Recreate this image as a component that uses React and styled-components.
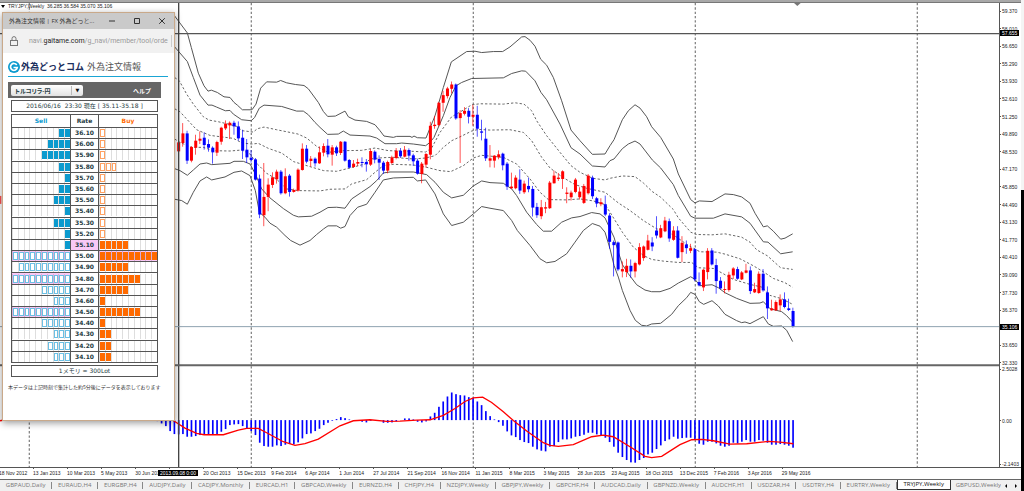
import React from 'react'
import styled, { createGlobalStyle } from 'styled-components'

const STEP = 12.8
const FIRST_X = 535.5
const ZERO_Y = 1260

// [colour, high, top, bottom, low], measured from the offset of each block
const candleBlocks = [
    {
        offset: 240,
        bars: [
            ['r', 170, 185, 212, 213], ['r', 127, 158, 187, 198], ['b', 150, 158, 240, 250], ['r', 196, 199, 240, 245],
            ['r', 162, 180, 201, 222], ['r', 152, 174, 180, 190], ['b', 155, 171, 193, 207], ['b', 176, 190, 201, 213],
            ['b', 197, 201, 215, 249], ['r', 180, 184, 216, 226], ['r', 138, 141, 183, 192], ['r', 119, 129, 143, 148],
            ['r', 122, 126, 134, 175], ['b', 120, 126, 137, 162], ['b', 122, 137, 173, 180], ['b', 147, 171, 210, 235],
            ['b', 175, 207, 230, 247], ['b', 208, 231, 238, 246], ['b', 232, 236, 297, 300], ['b', 282, 294, 402, 413],
            ['r', 247, 349, 404, 437], ['r', 293, 312, 349, 392], ['r', 275, 290, 313, 322], ['r', 267, 273, 296, 309],
            ['b', 268, 273, 338, 342], ['r', 263, 287, 338, 341], ['b', 280, 285, 334, 348], ['r', 324, 328, 334, 336],
            ['r', 263, 267, 330, 333], ['r', 188, 204, 268, 270], ['b', 193, 204, 243, 248], ['r', 226, 234, 241, 258],
            ['b', 230, 234, 248, 258], ['r', 197, 215, 248, 250], ['r', 188, 196, 216, 227], ['b', 175, 195, 221, 230],
            ['r', 193, 200, 222, 255], ['b', 195, 200, 218, 226], ['r', 181, 183, 217, 223], ['b', 181, 183, 240, 243],
            ['b', 235, 238, 261, 263], ['r', 238, 249, 259, 262], ['r', 234, 244, 249, 256], ['b', 230, 244, 247, 260],
            ['b', 235, 244, 251, 273], ['r', 205, 211, 252, 256], ['b', 209, 213, 237, 248], ['b', 224, 235, 246, 298],
            ['b', 241, 246, 270, 280], ['r', 240, 244, 270, 278],
        ],
    },
    {
        offset: 120,
        bars: [
            ['r', 345, 350, 367, 371], ['r', 322, 330, 352, 356], ['b', 322, 330, 347, 352], ['r', 316, 327, 348, 350],
            ['b', 323, 328, 345, 360], ['b', 339, 344, 362, 376], ['b', 354, 360, 399, 402], ['r', 364, 369, 400, 428],
            ['r', 337, 340, 372, 381], ['r', 243, 255, 342, 356], ['r', 225, 252, 256, 264], ['r', 183, 186, 253, 257],
            ['r', 150, 163, 186, 213], ['r', 138, 143, 166, 173], ['r', 122, 131, 144, 158], ['b', 128, 131, 233, 237],
            ['r', 208, 217, 232, 367], ['r', 199, 210, 219, 224], ['b', 202, 210, 228, 248], ['r', 192, 222, 228, 255],
            ['b', 195, 222, 264, 288], ['b', 237, 272, 276, 299], ['b', 261, 294, 353, 361], ['r', 313, 353, 360, 380],
            ['r', 343, 345, 360, 381], ['r', 329, 341, 350, 356], ['b', 336, 339, 374, 389], ['b', 364, 369, 438, 448],
            ['r', 396, 438, 443, 445], ['r', 404, 411, 443, 446], ['b', 386, 417, 450, 460], ['r', 420, 429, 455, 460],
            ['b', 411, 436, 446, 455], ['b', 436, 445, 501, 528], ['b', 487, 499, 524, 532], ['r', 478, 500, 527, 536],
            ['r', 484, 500, 504, 518], ['r', 421, 426, 503, 505], ['r', 390, 405, 428, 429], ['r', 397, 411, 415, 421],
            ['r', 389, 392, 415, 445], ['r', 440, 456, 460, 488], ['r', 450, 456, 470, 480], ['r', 412, 417, 454, 458],
            ['r', 440, 453, 470, 477], ['r', 430, 436, 487, 490], ['r', 400, 405, 458, 462], ['b', 405, 411, 467, 475],
            ['b', 469, 473, 489, 500],
        ],
    },
    {
        offset: 240,
        bars: [
            ['r', 353, 365, 371, 377], ['b', 345, 371, 402, 407], ['b', 398, 405, 484, 505], ['b', 480, 485, 494, 588],
            ['b', 483, 486, 567, 572], ['r', 543, 566, 573, 591], ['r', 535, 556, 575, 590], ['b', 537, 556, 573, 592],
            ['r', 544, 548, 573, 591], ['r', 488, 500, 552, 555], ['r', 495, 498, 533, 541], ['r', 463, 480, 508, 510],
            ['b', 470, 486, 498, 512], ['b', 407, 450, 465, 474], ['r', 433, 443, 471, 473], ['r', 409, 420, 452, 455],
            ['b', 414, 422, 474, 484], ['r', 437, 450, 478, 481], ['b', 437, 450, 532, 534], ['r', 467, 487, 515, 545],
            ['b', 480, 492, 503, 520], ['r', 490, 503, 511, 518], ['b', 503, 506, 597, 602], ['b', 576, 605, 615, 618],
            ['r', 565, 568, 621, 632], ['r', 503, 511, 575, 597], ['b', 503, 510, 552, 555], ['b', 535, 554, 602, 640],
            ['b', 590, 601, 624, 627], ['r', 603, 626, 629, 639], ['r', 574, 583, 629, 634], ['r', 560, 564, 585, 596],
            ['b', 559, 566, 595, 598], ['r', 572, 576, 597, 599], ['r', 550, 570, 577, 579], ['b', 558, 570, 632, 641],
            ['r', 607, 626, 636, 638], ['r', 573, 580, 638, 640], ['b', 566, 580, 630, 634], ['b', 618, 636, 684, 716],
            ['r', 658, 684, 690, 691], ['r', 660, 665, 690, 692], ['r', 642, 657, 675, 692], ['b', 636, 657, 680, 684],
            ['b', 655, 684, 689, 692], ['b', 682, 692, 740, 742],
        ],
    },
]

const candles = candleBlocks.flatMap(({ offset, bars }) =>
    bars.map(([color, ...prices]) => [color, ...prices.map((p) => p + offset)])
)

const solidBands = [
    '524,45 562,96 574,140 595,217 612,255 624,271 634,268 652,275 672,288 690,290 702,305 712,313 727,327 756,327 768,310 782,262 800,243 830,244 842,239 860,246 886,251 912,254 925,264 955,305 970,332 983,347 1006,346 1035,331 1045,348 1065,358 1100,362 1125,372 1140,390 1152,406 1180,410 1190,407 1230,407 1236,410 1242,406 1252,411 1278,412 1290,382 1305,345 1330,260 1354,183 1400,152 1425,151 1445,155 1480,152 1508,152 1530,138 1565,108 1575,107 1590,118 1605,136 1622,175 1640,193 1660,230 1685,300 1713,388 1740,420 1777,461 1815,460 1830,435 1842,417 1867,357 1885,330 1905,312 1920,322 1940,348 1955,378 1982,410 2020,475 2035,520 2072,597 2085,607 2098,601 2136,603 2175,580 2200,582 2225,589 2250,608 2265,638 2290,679 2302,676 2320,692 2342,716 2355,713 2378,700',
    '524,138 562,182 580,230 600,283 624,313 636,313 650,319 676,330 690,329 700,340 725,357 754,360 764,350 778,322 792,313 845,317 890,331 910,331 925,342 945,365 960,380 983,401 1015,400 1030,391 1050,403 1110,406 1130,412 1155,429 1190,429 1205,427 1240,430 1277,435 1290,425 1302,410 1330,345 1350,290 1368,255 1385,245 1415,233 1510,231 1535,218 1565,210 1577,211 1605,240 1623,275 1640,297 1680,370 1713,441 1740,460 1777,496 1815,499 1830,480 1842,475 1867,444 1885,430 1905,421 1920,430 1957,478 1982,502 2020,552 2035,585 2072,647 2085,653 2140,653 2175,640 2225,649 2250,668 2290,724 2304,725 2342,760 2378,754',
    '524,504 540,510 562,524 580,508 600,490 620,487 635,492 690,488 702,482 730,482 750,490 766,520 785,565 810,592 850,624 880,644 895,649 935,647 960,635 984,621 1010,620 1035,623 1055,595 1085,575 1110,558 1130,540 1150,517 1170,514 1240,514 1280,522 1305,545 1330,575 1355,592 1390,584 1420,556 1445,541 1470,546 1510,548 1535,565 1550,585 1580,635 1610,672 1630,692 1655,692 1685,665 1715,652 1740,648 1775,636 1800,640 1815,652 1830,685 1842,710 1855,755 1867,792 1885,820 1910,853 1935,869 1955,874 1980,874 2010,864 2035,848 2072,829 2085,837 2100,856 2136,853 2155,862 2175,877 2210,894 2250,909 2280,908 2290,904 2310,925 2345,934 2360,946 2378,966',
    '524,596 545,600 562,611 580,575 600,541 620,529 635,538 675,529 702,515 725,511 750,525 766,570 778,635 795,650 810,668 830,680 855,705 872,720 900,734 930,720 950,702 971,685 984,676 1010,676 1022,683 1035,678 1050,645 1073,620 1100,611 1125,575 1150,538 1180,532 1240,530 1252,541 1277,538 1305,580 1330,640 1355,675 1390,665 1420,640 1445,618 1470,623 1510,630 1535,660 1552,690 1590,735 1620,775 1640,787 1665,783 1700,760 1725,725 1750,690 1777,669 1800,677 1815,695 1830,745 1842,795 1855,830 1867,870 1890,930 1906,960 1925,975 1940,977 1955,971 1982,969 2015,942 2035,916 2060,892 2072,876 2085,882 2098,904 2111,912 2136,901 2155,917 2175,942 2210,961 2225,967 2235,965 2250,970 2290,949 2305,971 2320,978 2345,977 2360,990 2378,1024',
]

const dashedBands = [
    '524,230 538,240 560,280 580,310 610,348 627,358 655,363 685,370 710,377 727,390 760,394 772,384 792,379 830,387 894,400 920,412 950,437 984,455 1030,450 1085,449 1125,442 1165,450 1240,452 1277,454 1295,442 1320,395 1355,348 1390,328 1415,312 1440,309 1510,310 1545,306 1572,310 1595,330 1610,360 1640,405 1680,455 1713,495 1740,515 1778,533 1815,538 1830,533 1867,526 1905,528 1930,547 1957,573 1982,590 2020,627 2035,652 2072,695 2090,702 2136,703 2175,700 2225,710 2250,725 2270,748 2302,766 2342,802 2378,807',
    '524,324 540,333 574,370 590,387 630,404 700,413 727,427 755,430 775,428 805,443 845,457 881,483 930,498 971,510 1010,512 1050,502 1095,490 1110,475 1150,471 1180,470 1240,475 1277,472 1305,465 1330,440 1355,420 1385,406 1415,391 1435,386 1470,388 1530,387 1570,395 1595,420 1625,470 1650,502 1688,530 1725,552 1760,563 1815,575 1855,607 1890,630 1930,660 1970,685 2000,692 2030,710 2065,735 2100,754 2150,755 2175,761 2220,775 2260,796 2290,814 2320,834 2355,847 2378,861',
    '524,415 540,425 574,440 610,440 640,450 690,451 725,448 750,460 772,490 800,518 830,536 860,565 895,570 960,571 990,566 1035,565 1055,550 1100,537 1125,515 1150,495 1180,491 1240,493 1280,500 1320,510 1352,513 1390,495 1420,472 1445,464 1510,470 1550,490 1590,535 1620,575 1645,597 1700,598 1740,595 1780,601 1815,612 1830,635 1867,695 1900,740 1930,765 1955,777 1990,782 2035,786 2075,786 2095,802 2140,804 2170,820 2200,837 2250,852 2285,860 2310,885 2345,895 2378,912',
]

const signalLine =
    '515,1258 530,1268 555,1284 590,1300 612,1304 670,1304 715,1290 740,1285 775,1285 800,1298 850,1325 885,1336 915,1331 955,1317 1020,1277 1060,1262 1110,1259 1160,1264 1200,1263 1250,1260 1290,1259 1330,1246 1365,1225 1395,1204 1420,1193 1448,1191 1475,1207 1510,1235 1540,1261 1580,1293 1630,1328 1650,1336 1675,1339 1720,1334 1775,1310 1810,1305 1840,1310 1890,1340 1935,1369 1955,1373 1985,1369 2040,1334 2075,1319 2105,1318 2140,1322 2190,1332 2240,1331 2305,1324 2340,1326 2380,1331'

// starts five weeks before the first candle
const histogram = [
    -3, -10, -18, -33, -42, -43, -42, -50, -50, -48, -45, -43, -43, -42, -43, -35, -27, -15, -13, -12, -18, -25, -33, -45,
    -68, -78, -80, -80, -76, -78, -74, -72, -73, -67, -55, -42, -40, -33, -26, -15, -8, -2, 3, 9, 6, 2, 0, -2, -5, -7, -2,
    0, 0, -8, -8, -7, -4, 0, 5, 5, 2, -5, -7, -4, 11, 22, 40, 56, 71, 83, 78, 75, 74, 69, 67, 56, 45, 27, 12, 2, -6, -17,
    -34, -46, -51, -60, -66, -69, -80, -88, -92, -94, -80, -78, -66, -58, -58, -55, -50, -48, -44, -38, -38, -43, -45, -53,
    -66, -80, -98, -111, -120, -127, -128, -120, -114, -103, -98, -87, -76, -63, -58, -50, -56, -54, -53, -53, -60, -71, -74,
    -65, -65, -70, -77, -80, -77, -68, -70, -65, -60, -65, -65, -60, -62, -68, -74, -74, -72, -74, -77, -83,
]

const yearLines = [88, 754, 1420, 2086, 2752]

// the empty step is the one that the current price tag covers
const prices = [
    '59.370', '58.010', '56.650', '55.290', '53.930', '52.610', '51.250', '49.890', '48.530', '47.170', '45.850',
    '44.490', '43.130', '41.770', '40.410', '39.090', '37.730', '36.370', '', '33.650', '32.330',
]

// the empty step is the one under the cursor's date tag
const dates = [
    '18 Nov 2012', '13 Jan 2013', '10 Mar 2013', '5 May 2013', '30 Jun 2013', '', '20 Oct 2013',
    '15 Dec 2013', '9 Feb 2014', '6 Apr 2014', '1 Jun 2014', '27 Jul 2014', '21 Sep 2014', '16 Nov 2014',
    '11 Jan 2015', '8 Mar 2015', '3 May 2015', '28 Jun 2015', '23 Aug 2015', '18 Oct 2015', '13 Dec 2015',
    '7 Feb 2016', '3 Apr 2016', '29 May 2016',
]

const tabs = [
    'GBPAUD,Daily', 'EURAUD,H4', 'EURGBP,H4', 'AUDJPY,Daily', 'CADJPY,Monthly', 'EURCAD,H1', 'GBPCAD,Weekly',
    'EURNZD,H4', 'CHFJPY,H4', 'NZDJPY,Weekly', 'GBPJPY,Weekly', 'GBPCHF,H4', 'AUDCAD,Daily', 'GBPNZD,Weekly',
    'AUDCHF,H1', 'USDZAR,H4', 'USDTRY,H4', 'EURTRY,Weekly', 'TRYJPY,Weekly', 'GBPUSD,Weekly',
]

// [rate, sell, buy, highlighted cells]
const orders = [
    ['36.10', 2, 1], ['36.00', 4, 1], ['35.90', 5, 1], ['35.80', 2, 3], ['35.70', 1, 1], ['35.60', 2, 1],
    ['35.50', 3, 1], ['35.40', 1, 1], ['35.30', 3, 1], ['35.20', 1, 1], ['35.10', 1, 5, 'rate'],
    ['35.00', 10, 10, 'sell buy'], ['34.90', 9, 5], ['34.80', 10, 7, 'sell'], ['34.70', 5, 5], ['34.60', 3, 1],
    ['34.50', 10, 7, 'sell'], ['34.40', 5, 1], ['34.30', 3, 2], ['34.20', 4, 2], ['34.10', 3, 2],
]

const slots = Array.from({ length: 10 }, (_, i) => i)

function Chart() {
    return (
        <ChartSvg viewBox="0 6 2997 1395" preserveAspectRatio="none" aria-label="TRYJPY weekly chart">
            <g stroke="#888" strokeWidth="4" strokeDasharray="7 6">
                {yearLines.map((x) => (
                    <line key={x} x1={x} x2={x} y1="6" y2="1401" />
                ))}
            </g>
            <g fill="none" stroke="#555" strokeWidth="3">
                {solidBands.map((points, i) => (
                    <polyline key={i} points={points} />
                ))}
            </g>
            <g fill="none" stroke="#666" strokeWidth="3" strokeDasharray="7 6">
                {dashedBands.map((points, i) => (
                    <polyline key={i} points={points} />
                ))}
            </g>
            {candles.map(([color, high, top, bottom, low], i) => {
                const x = FIRST_X + i * STEP
                return (
                    <g key={i} fill={color === 'r' ? '#ff0000' : '#0000ff'}>
                        <rect x={x - 1} y={high} width="2" height={low - high} />
                        <rect x={x - 4} y={top} width="9" height={bottom - top} />
                    </g>
                )
            })}
            <g fill="#0000ff">
                {histogram.map((value, i) => (
                    <rect
                        key={i}
                        x={FIRST_X + (i - 5) * STEP - 2}
                        y={value > 0 ? ZERO_Y - value : ZERO_Y}
                        width="5"
                        height={Math.abs(value)}
                    />
                ))}
            </g>
            <polyline points={signalLine} fill="none" stroke="#ff0000" strokeWidth="4" />
            <polyline points="0,1262 16,1259" fill="none" stroke="#ff0000" strokeWidth="4" />
            <rect x="0" y="586" width="4" height="24" fill="#ff5050" />
            <line x1="0" x2="2997" y1="98" y2="98" stroke="#555" strokeWidth="4" />
            <line x1="536" x2="536" y1="6" y2="1401" stroke="#444" strokeWidth="4" />
            <line x1="0" x2="2997" y1="979" y2="979" stroke="#8fa3b0" strokeWidth="3" />
            <line x1="0" x2="2997" y1="1095" y2="1095" stroke="#666" strokeWidth="6" />
            <path d="M2382 6h20l-10 9z" fill="#777" />
        </ChartSvg>
    )
}

function Meter({ side, count, hollow }) {
    return (
        <Slots>
            {slots.map((i) => {
                const on = side === 'sell' ? i >= 10 - count : i < count
                return (
                    <Slot key={i}>
                        {on && <Unit $side={side} $hollow={hollow} />}
                    </Slot>
                )
            })}
        </Slots>
    )
}

function OrderWindow() {
    return (
        <Popup>
            <TitleBar>
                <WindowTitle>外為注文情報 | FX 外為どっと...</WindowTitle>
                <WindowButton aria-label="minimize">
                    <svg viewBox="0 0 8 8"><path d="M1 4h6" /></svg>
                </WindowButton>
                <WindowButton aria-label="maximize">
                    <svg viewBox="0 0 8 8"><path d="M1.5 1.5h5v5h-5z" /></svg>
                </WindowButton>
                <WindowButton aria-label="close">
                    <svg viewBox="0 0 8 8"><path d="M1.2 1.2l5.6 5.6M6.8 1.2L1.2 6.8" /></svg>
                </WindowButton>
            </TitleBar>
            <AddressBar>
                <svg width="8" height="11" viewBox="0 0 8 11" fill="none" stroke="#777">
                    <rect x="0.5" y="4.5" width="7" height="5" />
                    <path d="M2 4.500V2.600a2 2 0 0 1 4 0V4.500" />
                </svg>
                <Url>navi.<b>gaitame.com</b>/g_navi/member/tool/orde</Url>
            </AddressBar>
            <Content>
                <Brand>
                    <svg width="12" height="12" viewBox="0 0 24 24">
                        <circle cx="12" cy="12" r="12" fill="#0b9ace" />
                        <path d="M17.500 8A6.800 6.800 0 1 0 18.500 13H11" fill="none" stroke="#fff" strokeWidth="3.400" />
                    </svg>
                    <BrandName>外為どっとコム</BrandName>
                    <BrandSub>外為注文情報</BrandSub>
                </Brand>
                <Toolbar>
                    <PairWrap>
                        <PairSelect aria-label="通貨ペア" defaultValue="try">
                            <option value="try">トルコリラ-円</option>
                        </PairSelect>
                    </PairWrap>
                    <HelpLink href="#help">ヘルプ</HelpLink>
                </Toolbar>
                <Box>2016/06/16&nbsp; 23:30 現在 [ 35.11-35.18 ]</Box>
                <OrderTable>
                    <thead>
                        <tr>
                            <Th $color="#0b9ace">Sell</Th>
                            <Th $color="#1d3a42" $rate>Rate</Th>
                            <Th $color="#ff6a00">Buy</Th>
                        </tr>
                    </thead>
                    <tbody>
                        {orders.map(([rate, sell, buy, marks = ''], i) => (
                            <tr key={rate}>
                                <Td $on={marks.includes('sell')}>
                                    <Meter side="sell" count={sell} hollow={i > 10} />
                                </Td>
                                <Td $on={marks.includes('rate')}>{rate}</Td>
                                <Td $on={marks.includes('buy')}>
                                    <Meter side="buy" count={buy} hollow={i < 10} />
                                </Td>
                            </tr>
                        ))}
                    </tbody>
                </OrderTable>
                <Box>1メモリ = 300Lot</Box>
                <Note>本データは上記時刻で集計した約5分後にデータを表示しております</Note>
            </Content>
        </Popup>
    )
}

export default function App() {
    return (
        <>
            <GlobalStyle />
            <Screen>
                <Terminal>
                    <TopEdge />
                    <ChartRow>
                        <Plot>
                            <Chart />
                            <ChartTitle>
                                <svg width="4" height="3" viewBox="0 0 4 3"><path d="M0 0h4L2 3z" /></svg>
                                TRYJPY,Weekly&nbsp; 36.285 36.584 35.070 35.106
                            </ChartTitle>
                        </Plot>
                        <Axis>
                            <PriceScale>
                                {prices.map((price, i) => (
                                    <Tick key={i}>{price}</Tick>
                                ))}
                                <PriceTag $top={27}>57.655</PriceTag>
                                <PriceTag $top={321}>35.106</PriceTag>
                            </PriceScale>
                            <MacdScale>
                                <Tick>2.5028</Tick>
                                <Tick>0.00</Tick>
                                <Tick>-2.1403</Tick>
                            </MacdScale>
                        </Axis>
                    </ChartRow>
                    <DateRow>
                        <Dates>
                            {dates.map((date, i) => (
                                <DateLabel key={i}>{date}</DateLabel>
                            ))}
                        </Dates>
                        <DateTag>2013.09.08 0:00</DateTag>
                    </DateRow>
                    <TabBar>
                        <TabList>
                            {tabs.map((tab) => (
                                <Tab key={tab} $active={tab === 'TRYJPY,Weekly'}>{tab}</Tab>
                            ))}
                        </TabList>
                        <Arrow aria-label="previous"><svg viewBox="0 0 4 6"><path d="M3 1v4L1 3z" /></svg></Arrow>
                        <Arrow aria-label="next"><svg viewBox="0 0 4 6"><path d="M1 1v4l2-2z" /></svg></Arrow>
                    </TabBar>
                </Terminal>
                <Edge />
                <OrderWindow />
            </Screen>
        </>
    )
}

const GlobalStyle = createGlobalStyle`
    * {
        box-sizing: border-box;
    }
    body {
        margin: 0;
        background: #fff;
        font-family: "Liberation Sans", "Noto Sans CJK JP", sans-serif;
    }
    button {
        padding: 0;
        border: 0;
        background: none;
    }
`
const Screen = styled.div`
    position: relative;
    display: flex;
    min-height: 100vh;
    overflow: hidden;
`
const Terminal = styled.div`
    flex: 1;
    min-width: 0;
    display: flex;
    flex-direction: column;
`
const Edge = styled.div`
    width: 3px;
    background: linear-gradient(#f4f4f4 0 190px, #000 190px);
`
const TopEdge = styled.div`
    height: 2px;
    background: #a8a8a8;
`
const ChartRow = styled.div`
    flex: 1;
    display: flex;
    border-top: 1px solid #777;
    border-bottom: 1px solid #555;
`
const Plot = styled.div`
    position: relative;
    flex: 1;
    min-width: 0;
`
const ChartSvg = styled.svg`
    display: block;
    width: 100%;
    height: 464px;
`
const ChartTitle = styled.div`
    position: absolute;
    top: 0;
    left: 1px;
    display: flex;
    align-items: center;
    gap: 3px;
    padding-right: 1px;
    font-size: 5px;
    line-height: 7px;
    color: #222;
    white-space: nowrap;
`
const Axis = styled.div`
    width: 22px;
    display: grid;
    grid-template-rows: 361fr 103fr;
    border-left: 1px solid #555;
    font-size: 5px;
    line-height: 6px;
    color: #222;
`
const PriceScale = styled.div`
    position: relative;
    display: flex;
    flex-direction: column;
    justify-content: space-between;
    margin-bottom: -2px;
    padding-top: 5px;
`
const MacdScale = styled.div`
    display: grid;
    grid-template-rows: 51fr 43fr 6px;
    padding-top: 2px;
`
const Tick = styled.div`
    display: flex;
    align-items: center;
    align-self: start;
    gap: 1px;
    height: 6px;

    &::before {
        content: '';
        width: 1px;
        height: 1px;
        background: #555;
    }
`
const PriceTag = styled.div`
    position: absolute;
    top: ${({ $top }) => $top}px;
    left: 0;
    padding: 0 2px;
    background: #000;
    color: #fff;
`
const DateRow = styled.div`
    position: relative;
    height: 11px;
    font-size: 5px;
    line-height: 8px;
    color: #222;
`
const Dates = styled.div`
    display: flex;
    width: 80%;
    margin-left: -1px;
`
const DateLabel = styled.div`
    flex: 1;
    min-width: 0;
    white-space: nowrap;

    &::before {
        content: '';
        display: block;
        width: 1px;
        height: 1px;
        background: #555;
    }
`
const DateTag = styled.div`
    position: absolute;
    top: 2px;
    left: 158px;
    width: 40px;
    background: #000;
    color: #fff;
    line-height: 6px;
    text-align: center;
    white-space: nowrap;
`
const TabBar = styled.div`
    display: flex;
    height: 12px;
    border-top: 1px solid #666;
    background: #f0f0f0;
`
const TabList = styled.div`
    flex: 1;
    min-width: 0;
    display: flex;
    align-items: center;
    overflow: hidden;
`
const Tab = styled.button`
    flex: 1 0 auto;
    height: ${({ $active }) => ($active ? '10px' : '7px')};
    align-self: ${({ $active }) => ($active ? 'flex-start' : 'center')};
    padding: 0 5px;
    border-right: 1px solid ${({ $active }) => ($active ? '#333' : '#888')};
    border-left: ${({ $active }) => ($active ? '1px solid #333' : '0')};
    border-bottom: ${({ $active }) => ($active ? '1px solid #333' : '0')};
    background: ${({ $active }) => ($active ? '#fff' : 'none')};
    font-family: "Open Sans", sans-serif;
    font-size: 6px;
    line-height: 7px;
    color: ${({ $active }) => ($active ? '#111' : '#777')};
    white-space: nowrap;

    &:last-child {
        flex-grow: 0;
        padding-right: 0;
        border-right: 0;
    }
`
const Arrow = styled.button`
    width: 10px;
    display: flex;
    align-items: center;
    justify-content: center;

    & svg {
        width: 4px;
        height: 6px;
    }
`
const Popup = styled.section`
    position: absolute;
    top: 12px;
    left: 2px;
    width: 173px;
    border: 1px solid #c9a98a;
    background: #fff;
    box-shadow: 0 2px 7px rgba(0,0,0,0.4);
`
const TitleBar = styled.header`
    display: flex;
    align-items: center;
    height: 16px;
    padding-left: 6px;
    background: #cacaca;
`
const WindowTitle = styled.h1`
    flex: 1;
    margin: 0;
    font-family: "Open Sans", "Noto Sans CJK JP", sans-serif;
    font-size: 6px;
    font-weight: 400;
    line-height: 10px;
    color: #333;
    white-space: nowrap;
`
const WindowButton = styled.button`
    width: 25px;
    display: flex;
    align-items: center;
    justify-content: center;

    & svg {
        width: 8px;
        height: 8px;
        fill: none;
        stroke: #333;
        stroke-width: 1;
    }
`
const AddressBar = styled.div`
    display: flex;
    align-items: center;
    gap: 11px;
    height: 24px;
    padding: 0 2px 0 7px;
    background: #f1f1f1;
`
const Url = styled.div`
    flex: 1;
    border-right: 1px solid #ccc;
    font-family: Roboto, sans-serif;
    font-size: 7px;
    line-height: 12px;
    color: #999;
    white-space: nowrap;

    & b {
        font-weight: 400;
        color: #222;
    }
`
const Content = styled.div`
    padding: 5px 13px 29px 5px;
    color: #1d3a42;
    font-family: "DejaVu Sans", "Noto Sans CJK JP", sans-serif;
    font-size: 6px;
`
const Brand = styled.div`
    display: flex;
    align-items: center;
    height: 19px;
    margin-right: -7px;
    border-bottom: 1px solid #1aa5d4;
    font-size: 9px;
    line-height: 12px;
    white-space: nowrap;
`
const BrandName = styled.strong`
    margin: 0 3px 0 1px;
    font-weight: 700;
    color: #1c2f5e;
`
const BrandSub = styled.span`
    color: #555;
`
const Toolbar = styled.div`
    display: flex;
    align-items: center;
    justify-content: space-between;
    height: 16px;
    margin: 5px 0 2px;
    padding: 0 10px 0 3px;
    background: #666;
`
const PairWrap = styled.div`
    position: relative;
    display: flex;
    width: 72px;

    &::after {
        content: '▼';
        position: absolute;
        top: 1px;
        right: 0;
        width: 11px;
        border-left: 1px solid #bbb;
        font-size: 5px;
        line-height: 9px;
        text-align: center;
        color: #111;
        pointer-events: none;
    }
`
const PairSelect = styled.select`
    appearance: none;
    width: 100%;
    height: 11px;
    padding: 0 4px;
    border: 0;
    border-radius: 2px;
    background: linear-gradient(#fff, #e2e2e2);
    font-family: "Noto Sans CJK JP", sans-serif;
    font-size: 6px;
    font-weight: 700;
    line-height: 11px;
    font-feature-settings: "palt";
    color: #1d3a42;
`
const HelpLink = styled.a`
    font-weight: 700;
    color: #fff;
    text-decoration: none;
`
const Box = styled.div`
    height: 12px;
    margin: 0 3px 2px;
    border: 1px solid #555;
    line-height: 10px;
    text-align: center;
    white-space: nowrap;
`
const OrderTable = styled.table`
    table-layout: fixed;
    width: 147px;
    height: 249px;
    margin: 0 3px 2px;
    border-collapse: collapse;
    font-weight: 700;
    line-height: 8px;
    text-align: center;
`
const Th = styled.th`
    width: ${({ $rate }) => ($rate ? '28px' : 'auto')};
    height: 13px;
    padding: 0;
    border: 1px solid #555;
    color: ${({ $color }) => $color};
`
const Td = styled.td`
    padding: 0;
    border: 1px solid #555;
    background: ${({ $on }) => ($on ? '#f9c8f6' : 'transparent')};
`
const Slots = styled.div`
    display: grid;
    grid-template-columns: repeat(10, 1fr);
    height: 10px;
`
const Slot = styled.span`
    display: flex;
    padding: 1px 0;
    border-left: 1px solid rgba(0,0,0,0.13);
`
const Unit = styled.span`
    flex: 1;
    border: 1px solid ${({ $side, $hollow }) =>
        $side === 'sell' ? ($hollow ? '#6cc0e4' : '#0b9ace') : ($hollow ? '#ffa263' : '#ff6a00')};
    background: ${({ $side, $hollow }) => ($hollow ? '#fff' : $side === 'sell' ? '#0b9ace' : '#ff6a00')};
`
const Note = styled.p`
    margin: 6px 0 0;
    font-family: "Noto Sans CJK JP", sans-serif;
    font-size: 5px;
    line-height: 8px;
    color: #333;
    white-space: nowrap;
`
